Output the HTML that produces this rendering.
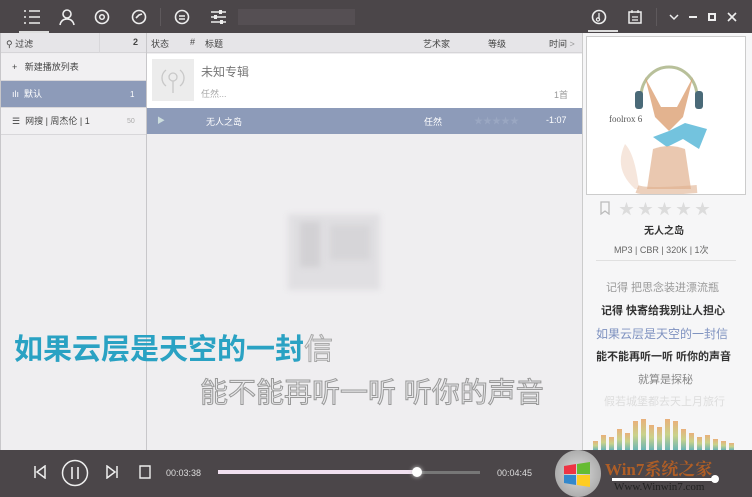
<!DOCTYPE html>
<html><head><meta charset="utf-8"><style>
*{margin:0;padding:0;box-sizing:border-box}
body{width:752px;height:497px;overflow:hidden;background:#efeef0;font-family:"Liberation Sans","Noto Sans CJK SC",sans-serif;font-size:9px;color:#444;position:relative}
.abs{position:absolute}
.top{left:0;top:0;width:752px;height:33px;background:#4b4649}
.bot{left:0;top:450px;width:752px;height:47px;background:#4b4649}
.hdr{top:33px;height:20px;background:#e6e5e8;border-bottom:1px solid #d6d5d8}
.row{left:0;width:146px;height:27px;border-bottom:1px solid #d8d7da;font-size:9px;line-height:27px}
</style></head><body>
<div class="abs top"></div>
<div class="abs" style="left:19px;top:31px;width:30px;height:2px;background:#ddd"></div>
<svg class="abs" style="left:23px;top:9px" width="18" height="16"><path d="M1 2h2M1 8h2M1 14h2M6 2h11M6 8h11M6 14h11" stroke="#eee" stroke-width="1.6"/></svg>
<svg class="abs" style="left:58px;top:8px" width="18" height="18"><circle cx="9" cy="6" r="4" fill="none" stroke="#eee" stroke-width="1.6"/><path d="M2 17c1-5 4-6 7-6s6 1 7 6" fill="none" stroke="#eee" stroke-width="1.6"/></svg>
<svg class="abs" style="left:94px;top:9px" width="16" height="16"><circle cx="8" cy="8" r="6.5" fill="none" stroke="#eee" stroke-width="1.6"/><circle cx="8" cy="8" r="2.3" fill="none" stroke="#eee" stroke-width="1.5"/></svg>
<svg class="abs" style="left:131px;top:9px" width="16" height="16"><circle cx="8" cy="8" r="6.5" fill="none" stroke="#eee" stroke-width="1.6"/><path d="M5 9l3-3 3-1" fill="none" stroke="#eee" stroke-width="1.6"/></svg>
<div class="abs" style="left:160px;top:8px;width:1px;height:18px;background:#5e595c"></div>
<svg class="abs" style="left:174px;top:9px" width="16" height="16"><circle cx="8" cy="8" r="6.5" fill="none" stroke="#eee" stroke-width="1.6"/><path d="M5 7h6M5 10h6" stroke="#eee" stroke-width="1.4"/></svg>
<svg class="abs" style="left:210px;top:10px" width="17" height="14"><path d="M1 2h15M1 7h15M1 12h15" stroke="#eee" stroke-width="1.5"/><rect x="9" y="0" width="3" height="4" fill="#eee"/><rect x="4" y="5" width="3" height="4" fill="#eee"/><rect x="10" y="10" width="3" height="4" fill="#eee"/></svg>
<div class="abs" style="left:238px;top:9px;width:117px;height:16px;background:#554f53"></div>
<svg class="abs" style="left:591px;top:9px" width="16" height="16"><circle cx="8" cy="8" r="6.5" fill="none" stroke="#eee" stroke-width="1.6"/><path d="M8 4v6" stroke="#eee" stroke-width="1.3"/><circle cx="7" cy="10.5" r="1.6" fill="none" stroke="#eee" stroke-width="1.2"/></svg>
<div class="abs" style="left:588px;top:30px;width:30px;height:2px;background:#ddd"></div>
<svg class="abs" style="left:627px;top:9px" width="16" height="16"><rect x="2" y="3" width="12" height="11" fill="none" stroke="#eee" stroke-width="1.5"/><path d="M5 1v3M11 1v3M5 8h6M5 11h6" stroke="#eee" stroke-width="1.3"/></svg>
<div class="abs" style="left:656px;top:8px;width:1px;height:18px;background:#5e595c"></div>
<svg class="abs" style="left:669px;top:13px" width="10" height="8"><path d="M1 2l4 4 4-4" fill="none" stroke="#eee" stroke-width="1.5"/></svg>
<div class="abs" style="left:689px;top:16px;width:8px;height:1.5px;background:#eee"></div>
<div class="abs" style="left:708px;top:13px;width:8px;height:8px;border:2px solid #eee"></div>
<svg class="abs" style="left:727px;top:12px" width="10" height="10"><path d="M1 1l8 8M9 1l-8 8" stroke="#eee" stroke-width="1.6"/></svg>

<div class="abs hdr" style="left:0;width:146px"></div>
<div class="abs" style="left:6px;top:37px;font-size:9px">⚲ 过滤</div>
<div class="abs" style="left:133px;top:37px;font-weight:bold">2</div>
<div class="abs" style="left:99px;top:33px;width:1px;height:20px;background:#d8d7da"></div>
<div class="abs row" style="top:54px;background:#f1f0f2"><span style="margin-left:12px">+ &nbsp;&nbsp;新建播放列表</span></div>
<div class="abs row" style="top:81px;background:#8d9bb9;color:#fff"><span style="margin-left:12px">ılı &nbsp;默认</span><span style="position:absolute;left:130px;font-size:8px">1</span></div>
<div class="abs row" style="top:108px;background:#f1f0f2"><span style="margin-left:12px">☰ &nbsp;网搜 | 周杰伦 | 1</span><span style="position:absolute;left:127px;font-size:7px;color:#aaa">50</span></div>
<div class="abs" style="left:146px;top:33px;width:1px;height:417px;background:#c8c7ca"></div>
<div class="abs" style="left:0;top:33px;width:1px;height:417px;background:#c8c7ca"></div>

<div class="abs hdr" style="left:147px;width:435px"></div>
<div class="abs" style="left:151px;top:37px">状态</div>
<div class="abs" style="left:190px;top:37px">#</div>
<div class="abs" style="left:205px;top:37px">标题</div>
<div class="abs" style="left:423px;top:37px">艺术家</div>
<div class="abs" style="left:488px;top:37px">等级</div>
<div class="abs" style="left:549px;top:37px">时间 <span style="color:#999">&gt;</span></div>
<div class="abs" style="left:147px;top:54px;width:435px;height:54px;background:#fff"></div>
<div class="abs" style="left:152px;top:59px;width:42px;height:42px;background:#ececec"></div>
<svg class="abs" style="left:161px;top:66px" width="24" height="28"><path d="M5 4a10 10 0 0 0 0 16M19 4a10 10 0 0 1 0 16" fill="none" stroke="#c8c8c8" stroke-width="1.3"/><circle cx="12" cy="11" r="4" fill="none" stroke="#c8c8c8" stroke-width="1.3"/><path d="M12 15v12" stroke="#c8c8c8" stroke-width="1.3"/></svg>
<div class="abs" style="left:201px;top:63px;font-size:12px;color:#777">未知专辑</div>
<div class="abs" style="left:201px;top:87px;font-size:9px;color:#aaa">任然...</div>
<div class="abs" style="left:554px;top:88px;font-size:9px;color:#999">1首</div>
<div class="abs" style="left:147px;top:108px;width:435px;height:26px;background:#8d9bb9"></div>
<div class="abs" style="left:157px;top:115px;color:#cdd;font-size:8px">▶</div>
<div class="abs" style="left:206px;top:115px;color:#fff">无人之岛</div>
<div class="abs" style="left:424px;top:115px;color:#fff">任然</div>
<div class="abs" style="left:474px;top:114px;color:#9aa7c2;font-size:9px">★★★★★</div>
<div class="abs" style="left:546px;top:115px;color:#fff">-1:07</div>
<div class="abs" style="left:288px;top:214px;width:92px;height:76px;background:#e0dfe2;filter:blur(3px)"></div>
<div class="abs" style="left:300px;top:222px;width:20px;height:45px;background:#d2d1d4;filter:blur(3px)"></div>
<div class="abs" style="left:330px;top:225px;width:40px;height:35px;background:#d6d5d8;filter:blur(3px)"></div>
<div class="abs" style="left:14px;top:333px;font-size:29px;line-height:34px;font-weight:bold;color:#2aa2c3;letter-spacing:0;white-space:nowrap">如果云层是天空的一封<span style="color:#e8e8ea;-webkit-text-stroke:1px #aaa;font-weight:normal">信</span></div>
<div class="abs" style="left:200px;top:376px;font-size:28px;line-height:34px;color:#e8e8ea;-webkit-text-stroke:1px #999;letter-spacing:0;white-space:nowrap">能不能再听一听 听你的声音</div>

<div class="abs" style="left:582px;top:33px;width:170px;height:417px;background:#f6f6f7;border-left:1px solid #ccc"></div>
<div class="abs" style="left:586px;top:36px;width:160px;height:159px;background:#fff;border:1px solid #ccc"></div>
<svg class="abs" style="left:587px;top:37px" width="158" height="157">
<path d="M54 60a28 30 0 0 1 56 0" fill="none" stroke="#b8c09a" stroke-width="3"/>
<rect x="48" y="54" width="8" height="18" rx="3" fill="#4a6a78"/><rect x="108" y="54" width="8" height="18" rx="3" fill="#4a6a78"/>
<path d="M58 40l10 40 14 14 14-14 10-40-16 30h-16z" fill="#d99a6a" opacity=".75"/>
<path d="M66 100l16-6 16-8 22 6-8 20-16-10-16 8z" fill="#5bb8d8" opacity=".85"/>
<path d="M66 112q16-6 32 0l6 40h-44z" fill="#e3b696" opacity=".75"/>
<path d="M48 152q-22-20-10-45 10 10 14 45z" fill="#f6e6dc"/>
<path d="M50 152q10 4 60 0" fill="none" stroke="#e0b090" stroke-width="8" opacity=".6"/>
<text x="22" y="85" font-size="9" fill="#555" font-family="Liberation Serif">foolrox 6</text>
</svg>
<svg class="abs" style="left:599px;top:201px" width="12" height="14"><path d="M2 1h8v12l-4-3-4 3z" fill="none" stroke="#bbb" stroke-width="1.3"/></svg>
<div class="abs" style="left:619px;top:198px;color:#dcdcdc;font-size:15px;letter-spacing:4px">★★★★★</div>
<div class="abs" style="left:644px;top:222px;font-size:10px;font-weight:bold;color:#333">无人之岛</div>
<div class="abs" style="left:614px;top:243px;font-size:9px;color:#666">MP3 | CBR | 320K | 1次</div>
<div class="abs" style="left:596px;top:260px;width:140px;height:1px;background:#e0e0e0"></div>
<div class="abs" style="left:606px;top:279px;font-size:11px;color:#999">记得 把思念装进漂流瓶</div>
<div class="abs" style="left:601px;top:302px;font-size:11px;color:#333;font-weight:bold">记得 快寄给我别让人担心</div>
<div class="abs" style="left:596px;top:325px;font-size:12px;color:#7f92c0">如果云层是天空的一封信</div>
<div class="abs" style="left:596px;top:348px;font-size:11px;color:#333;font-weight:bold">能不能再听一听 听你的声音</div>
<div class="abs" style="left:638px;top:371px;font-size:11px;color:#888">就算是探秘</div>
<div class="abs" style="left:604px;top:393px;font-size:11px;color:#ddd">假若城堡都去天上月旅行</div>
<svg class="abs" style="left:583px;top:405px" width="168" height="45">
<defs><linearGradient id="g" x1="0" y1="0" x2="0" y2="1"><stop offset="0" stop-color="#e9b07a"/><stop offset=".5" stop-color="#c9d28a"/><stop offset="1" stop-color="#6cb5b5"/></linearGradient></defs>
<g fill="url(#g)">
<rect x="10" y="36" width="5" height="9"/><rect x="18" y="30" width="5" height="15"/><rect x="26" y="32" width="5" height="13"/><rect x="34" y="24" width="5" height="21"/><rect x="42" y="28" width="5" height="17"/><rect x="50" y="16" width="5" height="29"/><rect x="58" y="14" width="5" height="31"/><rect x="66" y="20" width="5" height="25"/><rect x="74" y="22" width="5" height="23"/><rect x="82" y="14" width="5" height="31"/><rect x="90" y="16" width="5" height="29"/><rect x="98" y="24" width="5" height="21"/><rect x="106" y="28" width="5" height="17"/><rect x="114" y="32" width="5" height="13"/><rect x="122" y="30" width="5" height="15"/><rect x="130" y="34" width="5" height="11"/><rect x="138" y="36" width="5" height="9"/><rect x="146" y="38" width="5" height="7"/>
</g></svg>

<div class="abs bot"></div>
<svg class="abs" style="left:33px;top:465px" width="14" height="14"><path d="M2 1v12M12 1L4 7l8 6z" fill="none" stroke="#eee" stroke-width="1.5"/></svg>
<svg class="abs" style="left:61px;top:459px" width="28" height="28"><circle cx="14" cy="14" r="12.5" fill="none" stroke="#eee" stroke-width="1.5"/><path d="M11 8v12M17 8v12" stroke="#eee" stroke-width="1.6"/></svg>
<svg class="abs" style="left:105px;top:465px" width="14" height="14"><path d="M12 1v12M2 1l8 6-8 6z" fill="none" stroke="#eee" stroke-width="1.5"/></svg>
<svg class="abs" style="left:138px;top:465px" width="14" height="15"><path d="M2 1h10v12H2z" fill="none" stroke="#eee" stroke-width="1.4"/></svg>
<div class="abs" style="left:166px;top:468px;color:#ddd;font-size:9px">00:03:38</div>
<div class="abs" style="left:218px;top:471px;width:262px;height:3px;background:#777"></div>
<div class="abs" style="left:218px;top:470px;width:200px;height:4px;background:#f0e0f0"></div>
<div class="abs" style="left:412px;top:467px;width:10px;height:10px;border-radius:50%;background:#fff;box-shadow:0 0 4px #ccc"></div>
<div class="abs" style="left:497px;top:468px;color:#ddd;font-size:9px">00:04:45</div>
<div class="abs" style="left:555px;top:450px;width:46px;height:47px;border-radius:50%;background:radial-gradient(#ddd,#999)"></div>
<svg class="abs" style="left:562px;top:460px" width="30" height="28"><path d="M2 6l12-2v10H2z" fill="#e34"/><path d="M15 4l13-2v12H15z" fill="#6b3"/><path d="M2 15h12v10L2 23z" fill="#38c"/><path d="M15 15h13v12l-13-2z" fill="#fc2"/></svg>
<div class="abs" style="left:605px;top:455px;font-size:17px;font-weight:bold;color:#c8641e;font-family:'Liberation Serif','Noto Serif CJK SC',serif;opacity:.8;white-space:nowrap">Win7系统之家</div>
<div class="abs" style="left:612px;top:478px;width:106px;height:3px;background:#fff"></div>
<div class="abs" style="left:711px;top:475px;width:8px;height:8px;border-radius:50%;background:#fff"></div>
<div class="abs" style="left:614px;top:481px;font-size:11px;color:#222;font-family:'Liberation Serif',serif">Www.Winwin7.com</div>
</body></html>
